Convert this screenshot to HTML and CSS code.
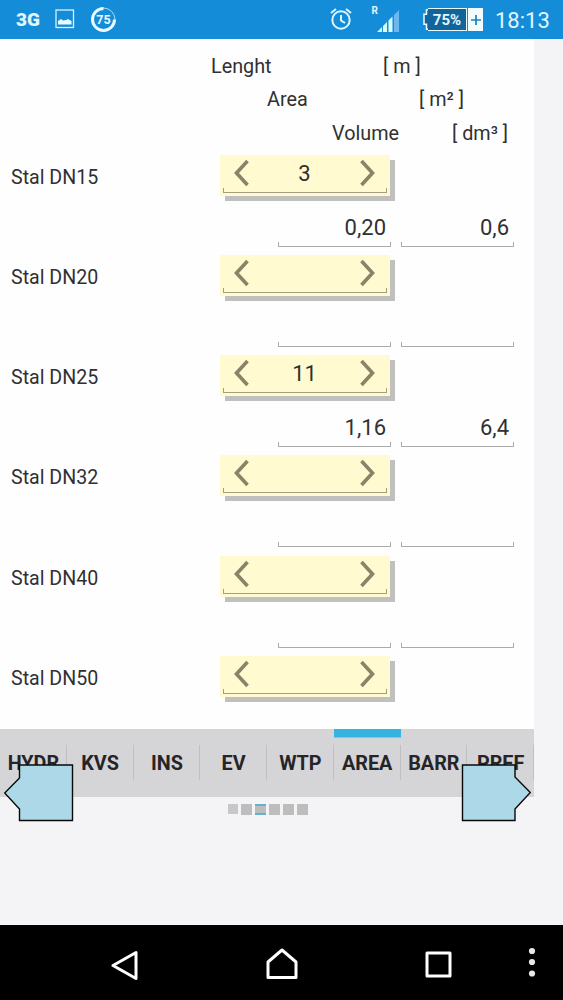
FILE: index.html
```html
<!DOCTYPE html>
<html lang="en">
<head>
    <meta charset="UTF-8">
    <meta name="viewport" content="width=device-width, initial-scale=1.0">
    <title>Area</title>
    <link rel="stylesheet" href="styles.css">
</head>
<body>
    <div class="status-bar">
        <span class="network">3G</span>
        <svg class="picture-icon" width="20" height="20" viewBox="0 0 20 20">
            <rect x="1" y="1" width="17.5" height="17.5" fill="none" stroke="#d8f2ff" stroke-width="1.3"/>
            <path d="M3 15.500V12l3-2 2 1.500 3-.5 2-1 1.500 1 2 1v3.500z" fill="#e8fbff"/>
        </svg>
        <svg class="percent-icon" width="27" height="27" viewBox="0 0 27 27">
            <circle cx="13.500" cy="13.500" r="11.500" fill="none" stroke="#9fdcf8" stroke-width="1"/>
            <path d="M13.500 2.500A11 11 0 1 0 24.500 13.500" fill="none" stroke="#e8fbff" stroke-width="3"/>
            <text x="13.500" y="18" class="percent-text">75</text>
        </svg>
        <svg class="alarm-icon" width="24" height="24" viewBox="0 0 24 24" fill="none" stroke="#dcf6ff" stroke-width="2">
            <circle cx="12" cy="13" r="8.700"/>
            <path d="M12 8v5.500l4 2.500M2 6l5-4M22 6l-5-4"/>
        </svg>
        <svg class="signal-icon" width="32" height="29" viewBox="0 0 32 29">
            <text x="0.500" y="9.500" class="roaming">R</text>
            <path d="M6 28l5-5v5z M12 28v-6l4-4v10z M17.500 28V16.500l4-4V28z" fill="#d6fbff"/>
            <path d="M23 28V11l5-5v22z" fill="#69b9f0"/>
        </svg>
        <div class="battery">
            <svg class="battery-tip" width="5" height="21" viewBox="0 0 5 21">
                <path d="M4 1v4H1v10h3v5h1V1z" fill="#11659b"/>
                <path d="M5 .7H3.500v4.500H1v10h2.500v5H5" fill="none" stroke="#e8fbff" stroke-width="1.500"/>
            </svg>
            <span class="battery-level">75%</span>
            <span class="battery-plus">
                <svg width="10" height="10" viewBox="0 0 10 10"><path d="M5 0v10M0 5h10" stroke="#1a80bd" stroke-width="1.700"/></svg>
            </span>
        </div>
        <span class="clock">18:13</span>
    </div>

    <div class="screen">
        <div class="content">
            <div class="legend">
                <div class="legend-row length"><span>Lenght</span><span class="unit">[ m ]</span></div>
                <div class="legend-row area"><span>Area</span><span class="unit">[ m² ]</span></div>
                <div class="legend-row volume"><span>Volume</span><span class="unit">[ dm³ ]</span></div>
            </div>
            <div class="pipes" id="pipes"></div>
        </div>

        <div class="tabs">
            <div class="tab">HYDR</div>
            <div class="tab">KVS</div>
            <div class="tab">INS</div>
            <div class="tab">EV</div>
            <div class="tab">WTP</div>
            <div class="tab active">AREA</div>
            <div class="tab">BARR</div>
            <div class="tab">PREF</div>
            <svg class="page-arrow prev" width="70" height="58" viewBox="0 0 70 58">
                <path d="M15.500 1H68.500v55.500H15.500V45L.7 29 15.500 14z"/>
            </svg>
            <svg class="page-arrow next" width="70" height="58" viewBox="0 0 70 58">
                <path d="M1.500 1h52.500v12l15.300 15.500L54 45v11.500H1.500z"/>
            </svg>
        </div>

        <div class="pager">
            <i class="dot first"></i>
            <i class="dot"></i>
            <i class="dot current"></i>
            <i class="dot"></i>
            <i class="dot"></i>
            <i class="dot"></i>
        </div>
    </div>

    <div class="nav-bar">
        <svg class="nav-back" width="28" height="32" viewBox="0 0 28 32"><path d="M2 15.500L25 2.500v26z"/></svg>
        <svg class="nav-home" width="32" height="32" viewBox="0 0 32 32"><path d="M2 29.500V14L16 2l14 12v15.500z"/></svg>
        <svg class="nav-recent" width="27" height="27" viewBox="0 0 27 27"><rect x="2" y="2" width="23" height="23"/></svg>
        <svg class="nav-more" width="8" height="30" viewBox="0 0 8 30">
            <circle cx="4" cy="4" r="3.100"/><circle cx="4" cy="15" r="3.100"/><circle cx="4" cy="26.500" r="3.100"/>
        </svg>
    </div>

    <script src="script.js"></script>
</body>
</html>
```

FILE: styles.css
```css
* {
    box-sizing: border-box;
}

body {
    display: flex;
    flex-direction: column;
    height: 1000px;
    margin: 0;
    background-color: #f4f3f6;
    color: #303033;
    font-family: Roboto, sans-serif;
    overflow: hidden;
}

/* status bar */
.status-bar {
    display: flex;
    align-items: flex-start;
    height: 39px;
    flex-shrink: 0;
    background-color: #148cd8;
    color: #e0f7ff;
}

.network {
    width: 24px;
    margin: 9px 0 0 16px;
    font-size: 19px;
    line-height: 22px;
    font-weight: 900;
}

.picture-icon {
    margin: 9px 0 0 15px;
}

.percent-icon {
    margin: 6px 0 0 15px;
}

.percent-text {
    font-size: 12.5px;
    font-weight: 700;
    fill: #e8fbff;
    text-anchor: middle;
}

.alarm-icon {
    margin: 7px 0 0 212px;
}

.signal-icon {
    margin: 4px 0 0 18px;
}

.roaming {
    font-size: 10px;
    font-weight: 700;
    fill: #e0f7ff;
}

.battery {
    display: flex;
    height: 23px;
    margin: 8px 0 0 20px;
}

.battery-tip {
    margin-top: 1px;
}

.battery-level {
    width: 39px;
    border: 1.5px solid #e8fbff;
    border-left: none;
    background-color: #11659b;
    font-size: 15px;
    line-height: 22px;
    font-weight: 700;
    text-align: center;
}

.battery-plus {
    display: flex;
    align-items: center;
    justify-content: center;
    width: 15px;
    margin-left: 1px;
    background-color: #f2fcff;
}

.clock {
    margin: 7px 0 0 12px;
    font-size: 22px;
    line-height: 27px;
}

/* page */
.screen {
    width: 534px;
    height: 886px;
}

.content {
    height: 690px;
    background-color: #fefefe;
    overflow: hidden;
}

.legend {
    padding-top: 11px;
    height: 116px;
    font-size: 19.8px;
}

.legend-row {
    display: flex;
    height: 33.4px;
    line-height: 34px;
}

.length { padding-left: 211px; }
.area { padding-left: 267px; }
.volume { padding-left: 332px; }

.length span:first-child { width: 172px; }
.area span:first-child { width: 152px; }
.volume span:first-child { width: 120px; }

.unit {
    white-space: pre;
}

/* one pipe size */
.pipe {
    display: grid;
    grid-template-columns: 220px 1fr;
    grid-template-rows: 50px 50.15px;
    height: 100.15px;
}

.pipe-name {
    padding-left: 11px;
    font-size: 19.6px;
    line-height: 46px;
}

.stepper {
    position: relative;
    display: flex;
    justify-content: space-between;
    width: 170px;
    height: 41px;
    padding: 4px 15px 0 14px;
    background-color: #fffacf;
    box-shadow: 5px 5px 0 #c0c0bf;
    font-size: 22px;
    line-height: 29px;
}

.stepper svg {
    fill: none;
    stroke: #8b8268;
    stroke-width: 3.6;
}

.underline {
    border: 1px solid #aaa;
    border-top: none;
    height: 5px;
}

.stepper .underline {
    position: absolute;
    left: 3px;
    right: 3px;
    bottom: 3px;
    border-color: #a49e80;
}

.results {
    grid-column: 1 / -1;
    display: flex;
    gap: 10px;
    padding: 8px 0 0 278px;
}

.result {
    width: 113px;
    height: 34px;
    font-size: 22px;
    text-align: right;
}

.result-value {
    height: 29px;
    padding-right: 5px;
    line-height: 29px;
}

/* tabs */
.tabs {
    position: relative;
    display: flex;
    height: 68px;
    background-color: #d5d4d7;
}

.tab {
    position: relative;
    flex: 1;
    font-size: 19.8px;
    font-weight: 700;
    line-height: 69px;
    text-align: center;
    color: #252528;
}

.tab::after {
    content: '';
    position: absolute;
    top: 16px;
    right: 0;
    width: 1px;
    height: 35px;
    background-color: #c0bfc3;
}

.tab.active {
    box-shadow: inset 0 8.5px 0 #34b4e1;
}

.page-arrow {
    position: absolute;
    top: 35px;
    fill: #add8e8;
    stroke: #080808;
    stroke-width: 1.4;
}

.prev { left: 4px; }
.next { left: 461px; }

.pager {
    display: flex;
    gap: 3px;
    padding: 7px 0 0 228px;
}

.dot {
    width: 11px;
    height: 11px;
    background-color: #bebdbe;
}

.dot.first {
    width: 10px;
    height: 10px;
    background-color: #c8c7c8;
}

.dot.current {
    border-top: 2px solid #62b3cf;
    border-bottom: 2px solid #62b3cf;
}

/* navigation bar */
.nav-bar {
    display: flex;
    height: 75px;
    flex-shrink: 0;
    background-color: #000;
}

.nav-bar svg {
    fill: none;
    stroke: #fff;
    stroke-width: 3;
    stroke-linejoin: round;
}

.nav-back { margin: 25px 0 0 111px; }
.nav-home { margin: 23px 0 0 127px; }
.nav-recent { margin: 26px 0 0 127px; }

.nav-bar .nav-more {
    margin: 22px 0 0 76px;
    fill: #e8e8e8;
    stroke: none;
}
```

FILE: script.js
```js
const pipes = [
    { name: 'Stal DN15', length: '3', area: '0,20', volume: '0,6' },
    { name: 'Stal DN20', length: '', area: '', volume: '' },
    { name: 'Stal DN25', length: '11', area: '1,16', volume: '6,4' },
    { name: 'Stal DN32', length: '', area: '', volume: '' },
    { name: 'Stal DN40', length: '', area: '', volume: '' },
    { name: 'Stal DN50', length: '', area: '', volume: '' }
];

function result(value) {
    return `<div class="result"><div class="result-value">${value}</div><div class="underline"></div></div>`;
}

document.getElementById('pipes').innerHTML = pipes.map(pipe => `
    <div class="pipe">
        <div class="pipe-name">${pipe.name}</div>
        <div class="stepper">
            <svg width="16" height="30" viewBox="0 0 16 30"><path d="M13.500 2L2.500 14l11 12"/></svg>
            <span>${pipe.length}</span>
            <svg width="16" height="30" viewBox="0 0 16 30"><path d="M2.500 2l11 12-11 12"/></svg>
            <div class="underline"></div>
        </div>
        <div class="results">${result(pipe.area)}${result(pipe.volume)}</div>
    </div>`).join('');
```
